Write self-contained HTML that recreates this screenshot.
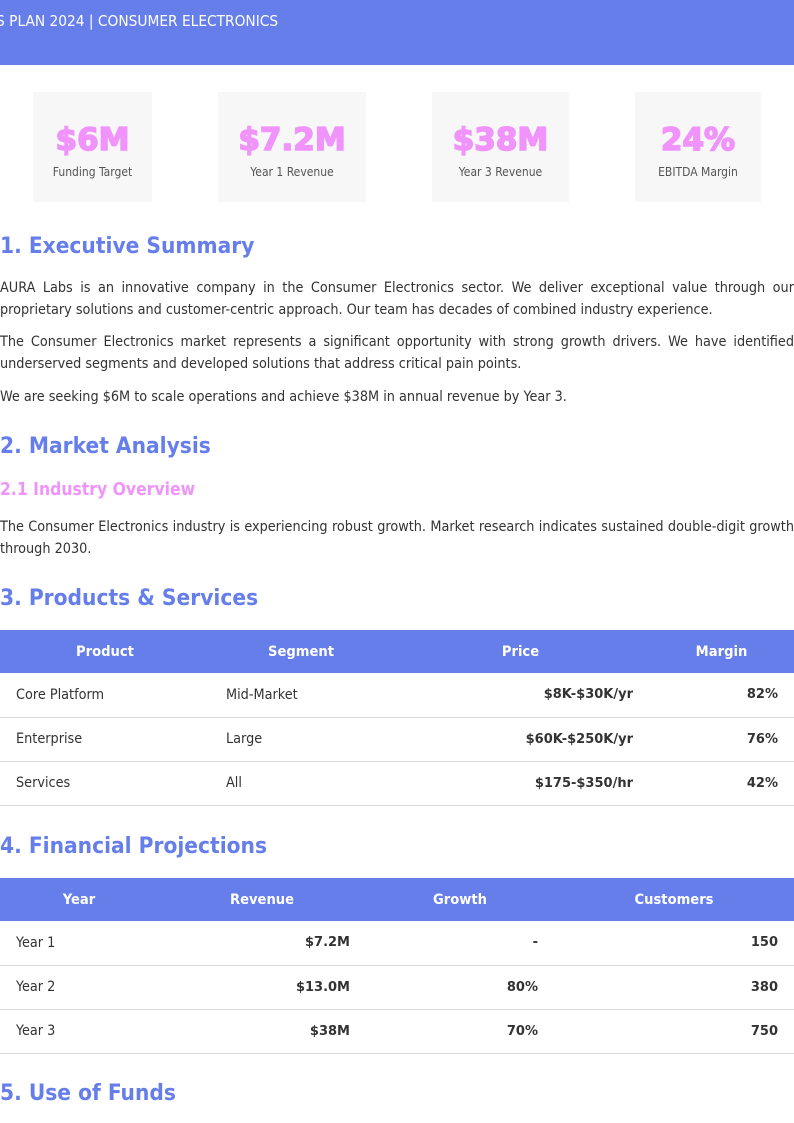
<!DOCTYPE html>
<html><head><meta charset="utf-8"><style>
*{margin:0;padding:0;box-sizing:border-box}
html,body{width:794px;height:1123px;overflow:hidden;background:#fff}
body{position:relative;font-family:"DejaVu Sans Condensed","DejaVu Sans","Liberation Sans",sans-serif;color:#333}
.a{position:absolute}
.hdr{left:0;top:0;width:794px;height:65px;background:#667eea;overflow:hidden}
.hdr span{position:absolute;left:-64px;top:12px;color:#fff;font-size:15.3px;white-space:nowrap}
.card{background:#f7f7f7;top:92px;height:110px;text-align:center}
.card b{display:block;color:#f093fb;font-family:"DejaVu Sans",sans-serif;font-weight:900;font-size:31px;margin-top:29px;line-height:38px;-webkit-text-stroke:1.6px #f093fb}
.card i{display:block;font-style:normal;font-size:12px;color:#555;margin-top:6px}
h2{position:absolute;left:0;color:#667eea;font-size:22.5px;font-weight:bold;line-height:30px;white-space:nowrap}
h3{position:absolute;left:0;color:#f093fb;font-size:17.4px;font-weight:bold;white-space:nowrap}
.l{position:absolute;left:0;width:794px;font-size:14.3px;line-height:20px;white-space:nowrap;text-align:justify;text-align-last:justify;overflow:hidden}
.l.e{text-align-last:left}
table{position:absolute;left:0;width:794px;border-collapse:collapse;font-size:14.3px;table-layout:fixed}
th{background:#667eea;color:#fff;font-weight:bold;height:43px;text-align:center;font-size:14.6px}
td{height:44px;border-bottom:1px solid #ddd;padding:0 16px;white-space:nowrap}
td.r{text-align:right;font-weight:bold;font-family:"DejaVu Sans",sans-serif;font-size:13px}
</style></head><body>
<div class="a hdr"><span>BUSINESS PLAN 2024 | CONSUMER ELECTRONICS</span></div>
<div class="a card" style="left:33px;width:119px"><b>$6M</b><i>Funding Target</i></div>
<div class="a card" style="left:218px;width:148px"><b>$7.2M</b><i>Year 1 Revenue</i></div>
<div class="a card" style="left:432px;width:137px"><b>$38M</b><i>Year 3 Revenue</i></div>
<div class="a card" style="left:635px;width:126px"><b>24%</b><i>EBITDA Margin</i></div>

<h2 style="top:231px">1. Executive Summary</h2>
<div class="l" style="top:278px">AURA Labs is an innovative company in the Consumer Electronics sector. We deliver exceptional value through our</div>
<div class="l e" style="top:300px">proprietary solutions and customer-centric approach. Our team has decades of combined industry experience.</div>
<div class="l" style="top:332px">The Consumer Electronics market represents a significant opportunity with strong growth drivers. We have identified</div>
<div class="l e" style="top:354px">underserved segments and developed solutions that address critical pain points.</div>
<div class="l e" style="top:387px">We are seeking $6M to scale operations and achieve $38M in annual revenue by Year 3.</div>

<h2 style="top:431px">2. Market Analysis</h2>
<h3 style="top:480px">2.1 Industry Overview</h3>
<div class="l" style="top:517px">The Consumer Electronics industry is experiencing robust growth. Market research indicates sustained double-digit growth</div>
<div class="l e" style="top:539px">through 2030.</div>

<h2 style="top:583px">3. Products &amp; Services</h2>
<table style="top:630px">
<colgroup><col style="width:210px"><col style="width:182px"><col style="width:257px"><col style="width:145px"></colgroup>
<tr><th>Product</th><th>Segment</th><th>Price</th><th>Margin</th></tr>
<tr><td>Core Platform</td><td>Mid-Market</td><td class="r">$8K-$30K/yr</td><td class="r">82%</td></tr>
<tr><td>Enterprise</td><td>Large</td><td class="r">$60K-$250K/yr</td><td class="r">76%</td></tr>
<tr><td>Services</td><td>All</td><td class="r">$175-$350/hr</td><td class="r">42%</td></tr>
</table>

<h2 style="top:831px">4. Financial Projections</h2>
<table style="top:878px">
<colgroup><col style="width:158px"><col style="width:208px"><col style="width:188px"><col style="width:240px"></colgroup>
<tr><th>Year</th><th>Revenue</th><th>Growth</th><th>Customers</th></tr>
<tr><td>Year 1</td><td class="r">$7.2M</td><td class="r">-</td><td class="r">150</td></tr>
<tr><td>Year 2</td><td class="r">$13.0M</td><td class="r">80%</td><td class="r">380</td></tr>
<tr><td>Year 3</td><td class="r">$38M</td><td class="r">70%</td><td class="r">750</td></tr>
</table>

<h2 style="top:1078px">5. Use of Funds</h2>
</body></html>
